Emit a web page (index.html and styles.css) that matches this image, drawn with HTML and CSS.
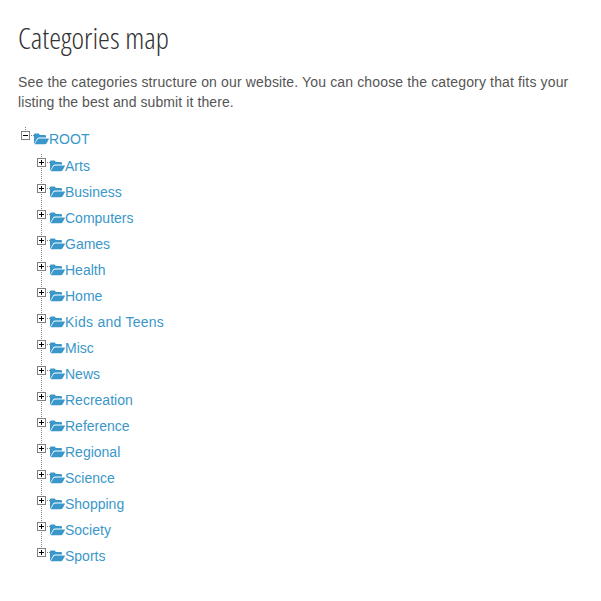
FILE: index.html
```html
<!DOCTYPE html>
<html lang="en">
<head>
<meta charset="utf-8">
<title>Categories map</title>
<link rel="stylesheet" href="styles.css">
</head>
<body>
<svg class="defs" aria-hidden="true"><symbol id="folder" viewBox="0 0 15 12"><path d="M0 10V1.500Q0 .5 1 .5H4.500Q5.500.5 5.700 2H10.800Q12 2 12 3.200V4.500H5.200Q3.900 4.500 3 5.800L.4 10.600Z"/><path d="M.6 11.300 3.500 6.400Q4.100 5.400 5.400 5.400H14.500Q15.200 5.400 14.800 6.200L12.600 10.300Q12 11.300 10.600 11.300Z"/></symbol></svg>
<main>
<h1>Categories map</h1>
<p><span class="lead">See the categories structure on our website. You can choose the category that fits your</span> listing the best and submit it there.</p>
<div class="root"><span class="toggle minus"></span><a><svg class="icon"><use href="#folder"/></svg>ROOT</a></div>
<ul class="tree">
<li><span class="toggle plus"></span><a><svg class="icon"><use href="#folder"/></svg>Arts</a></li>
<li><span class="toggle plus"></span><a><svg class="icon"><use href="#folder"/></svg>Business</a></li>
<li><span class="toggle plus"></span><a><svg class="icon"><use href="#folder"/></svg>Computers</a></li>
<li><span class="toggle plus"></span><a><svg class="icon"><use href="#folder"/></svg>Games</a></li>
<li><span class="toggle plus"></span><a><svg class="icon"><use href="#folder"/></svg>Health</a></li>
<li><span class="toggle plus"></span><a><svg class="icon"><use href="#folder"/></svg>Home</a></li>
<li><span class="toggle plus"></span><a class="wide"><svg class="icon"><use href="#folder"/></svg>Kids and Teens</a></li>
<li><span class="toggle plus"></span><a><svg class="icon"><use href="#folder"/></svg>Misc</a></li>
<li><span class="toggle plus"></span><a><svg class="icon"><use href="#folder"/></svg>News</a></li>
<li><span class="toggle plus"></span><a><svg class="icon"><use href="#folder"/></svg>Recreation</a></li>
<li><span class="toggle plus"></span><a><svg class="icon"><use href="#folder"/></svg>Reference</a></li>
<li><span class="toggle plus"></span><a><svg class="icon"><use href="#folder"/></svg>Regional</a></li>
<li><span class="toggle plus"></span><a><svg class="icon"><use href="#folder"/></svg>Science</a></li>
<li><span class="toggle plus"></span><a><svg class="icon"><use href="#folder"/></svg>Shopping</a></li>
<li><span class="toggle plus"></span><a><svg class="icon"><use href="#folder"/></svg>Society</a></li>
<li><span class="toggle plus"></span><a><svg class="icon"><use href="#folder"/></svg>Sports</a></li>
</ul>
</main>
</body>
</html>
```
FILE: styles.css
```css
body { margin: 0; background: #fff; color: #555; font: 14px/20px "Liberation Sans", Arial, sans-serif; }
.defs { position: absolute; width: 0; height: 0; }
main { padding: 18px 18px 0; }
h1 { margin: 0 0 14px; color: #333; font: 300 30px/40px "Open Sans", sans-serif; font-stretch: 75%; white-space: nowrap; }
p { margin: 0 0 14px; letter-spacing: .09px; }
.lead { display: block; letter-spacing: .145px; white-space: nowrap; }
.root, li { display: flex; align-items: flex-start; height: 26px; }
.root { height: 27px; padding-left: 3px; }
.tree { margin: 0; padding: 0 0 0 19px; list-style: none; }
.toggle { position: relative; box-sizing: border-box; flex: none; width: 9px; height: 9px; margin: 5px 4px 0 0; border: 1px solid #808080; background: linear-gradient(#000, #000) center / 5px 1px no-repeat #fff; }
.plus { background: linear-gradient(#000, #000) center / 5px 1px no-repeat, linear-gradient(#000, #000) center / 1px 5px no-repeat #fff; }
.minus::before { content: ""; position: absolute; left: 3px; top: -5px; width: 1px; height: 4px; background: repeating-linear-gradient(#808080 0 1px, transparent 1px 2px); }
.toggle::after { content: ""; position: absolute; left: 9px; top: 3px; width: 3px; height: 1px; background: repeating-linear-gradient(90deg, #808080 0 1px, transparent 1px 2px); }
li { background: repeating-linear-gradient(transparent 0 1px, #808080 1px 2px) 4px 0 / 1px 26px no-repeat; }
li:last-child { background: repeating-linear-gradient(transparent 0 1px, #808080 1px 2px) 4px 0 / 1px 6px no-repeat; }
a { display: flex; align-items: flex-start; color: #3a97c9; line-height: 26px; }
.wide { letter-spacing: .26px; }
.icon { width: 15px; height: 12px; margin-top: 7px; fill: #3a97c9; }
```
